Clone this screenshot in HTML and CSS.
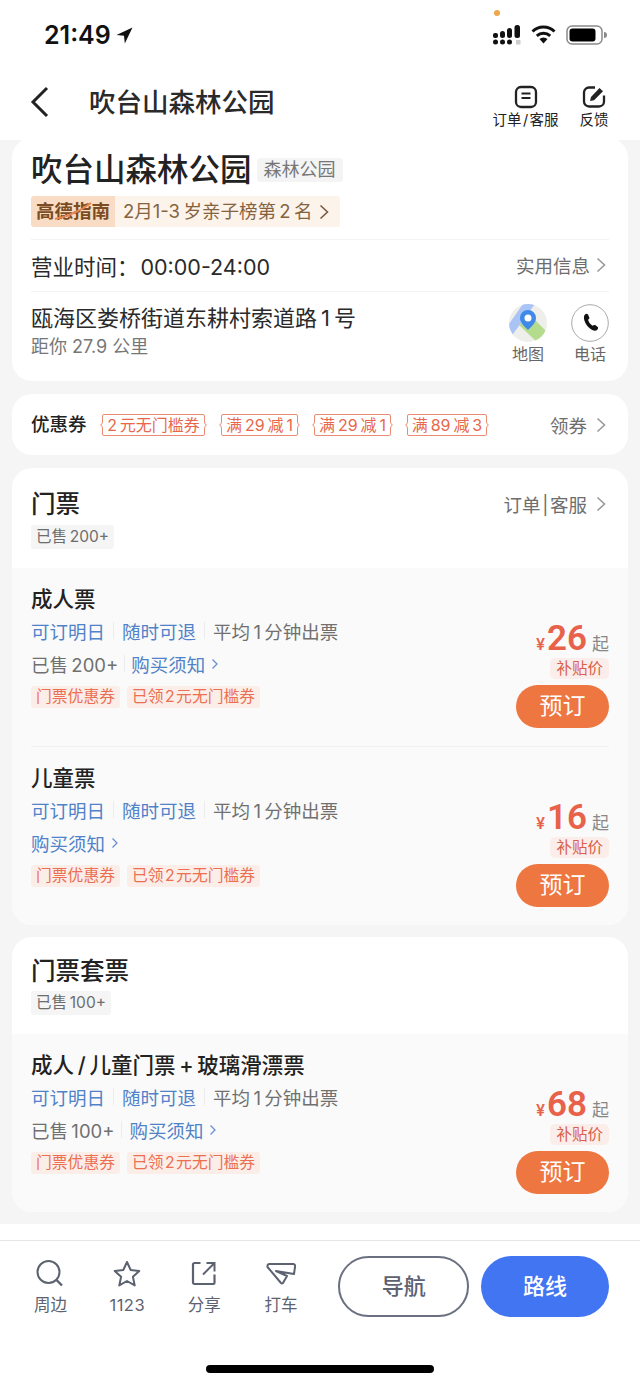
FILE: index.html
```html
<!DOCTYPE html>
<html lang="zh-CN">
<head>
<meta charset="utf-8">
<title>吹台山森林公园</title>
<link rel="stylesheet" href="styles.css">
</head>
<body>
<div class="page">
  <header class="top">
    <div class="status">
      <div class="clock"><span>21:49</span>
        <svg class="loc" width="17" height="17" viewBox="0 0 17 17"><path d="M16.500.5.500 8l7.500.8.800 7.700z" fill="#111"/></svg>
      </div>
      <div class="sys">
        <i class="dot"></i>
        <svg width="28" height="20" viewBox="0 0 28 20"><g fill="#111"><circle cx="2.500" cy="17" r="2.500"/><circle cx="9.500" cy="17" r="2.500"/><circle cx="16.500" cy="17" r="2.500"/><rect x="23" y="15" width="4.500" height="4.500" fill="#ccc"/><rect x="0" y="8" width="5" height="5" rx="2"/><rect x="7" y="6" width="5" height="7" rx="2.500"/><rect x="14" y="3" width="5" height="10" rx="2.500"/><rect x="21.500" y="0" width="5.500" height="13" rx="2.500"/></g></svg>
        <svg class="wifi" width="25" height="19" viewBox="0 0 25 19"><g fill="none" stroke="#111" stroke-width="3"><path d="M1.500 6.500a16 16 0 0 1 22 0"/><path d="M5.800 10.800a10 10 0 0 1 13.400 0"/></g><path d="M8.500 14a6 6 0 0 1 8 0l-4 4.500z" fill="#111"/></svg>
        <svg class="batt" width="41" height="20" viewBox="0 0 41 20"><rect x="1" y="1" width="35" height="18" rx="5" fill="#fff" stroke="#8a8a8a" stroke-width="1.500"/><rect x="3.500" y="3.500" width="26" height="13" rx="3" fill="#000"/><path d="M38 7a3 3 0 0 1 0 6z" fill="#8a8a8a"/></svg>
      </div>
    </div>
    <nav class="nav">
      <svg class="back" width="19" height="32" viewBox="0 0 19 32"><path d="M17 2 3 16l14 14" fill="none" stroke="#222" stroke-width="3"/></svg>
      <h1 class="nav-title">吹台山森林公园</h1>
      <div class="nav-act act-order">
        <svg width="24" height="24" viewBox="0 0 24 24"><rect x="2" y="2" width="20" height="20" rx="5" fill="none" stroke="#222" stroke-width="2.300"/><path d="M7.500 8.500h9M7.500 13h9" stroke="#222" stroke-width="2.200" fill="none"/></svg>
        <span>订单&#8202;/&#8202;客服</span>
      </div>
      <div class="nav-act act-feed">
        <svg width="24" height="24" viewBox="0 0 24 24"><path d="M13 2.500H7a5 5 0 0 0-5 5v9a5 5 0 0 0 5 5h10a5 5 0 0 0 5-5v-6" fill="none" stroke="#222" stroke-width="2.300"/><path d="m8 16 1-4 8.500-9 3.500 3.200-9 9z" fill="#222"/></svg>
        <span>反馈</span>
      </div>
    </nav>
  </header>

  <main class="main">
    <section class="card info">
      <div class="name-row">
        <h2 class="name">吹台山森林公园</h2>
        <span class="kind">森林公园</span>
      </div>
      <div class="guide">
        <span class="guide-logo">高德指南<svg class="swoosh" width="84" height="31" viewBox="0 0 84 31"><path d="M24 23Q44 19 60 7" fill="none" stroke="#ea8450" stroke-width="2"/></svg></span>
        <span class="guide-text">2月1-3&#8201;岁亲子榜第&#8201;2&#8201;名
          <svg class="chev" width="10" height="16" viewBox="0 0 10 16"><path d="m1.500 1.500 7 6.500-7 6.500" fill="none" stroke="#7a5a40" stroke-width="1.600"/></svg>
        </span>
      </div>
      <div class="hours">
        <span class="hours-text">营业时间：&#8202;00:00-24:00</span>
        <span class="more">实用信息
          <svg class="chev" width="10" height="16" viewBox="0 0 10 16"><path d="m1.500 1.500 7 6.500-7 6.500" fill="none" stroke="#999" stroke-width="1.600"/></svg>
        </span>
      </div>
      <div class="addr">
        <div class="addr-text">
          <div class="addr-main">瓯海区娄桥街道东耕村索道路&#8201;1&#8201;号</div>
          <div class="addr-dist">距你 27.9 公里</div>
        </div>
        <div class="round">
          <svg width="38" height="38" viewBox="0 0 38 38"><defs><clipPath id="mapc"><circle cx="19" cy="19" r="19"/></clipPath></defs><g clip-path="url(#mapc)"><rect width="38" height="38" fill="#eeeeea"/><path d="M0 20 14 0h12l-6 8L4 30H0z" fill="#a9c4f5"/><path d="m10 21 12-9 16 16-10 10z" fill="#b4dc8c"/></g><path d="M19 6a8 8 0 0 1 8 8c0 5-5 9-8 12-3-3-8-7-8-12a8 8 0 0 1 8-8z" fill="#3f8ae8"/><circle cx="19" cy="14" r="3.500" fill="#fff"/></svg>
          <span>地图</span>
        </div>
        <div class="round">
          <svg width="38" height="38" viewBox="0 0 38 38"><circle cx="19" cy="19" r="18.300" fill="#fff" stroke="#aaa" stroke-width="1"/><path d="M14 10.500c1-.8 2.500-1 3 0l1.300 3c.3.800-.2 1.600-1.300 2.300.8 2.600 2.300 4.600 4.600 6 1-.8 1.800-1.100 2.600-.7l2.500 1.800c.8.700.4 1.800-.4 2.800-1.200 1.300-3.200 1.300-5 .3-4.500-2.500-7.700-7-8.300-11.500-.2-1.600.1-3 1-4z" fill="#111"/></svg>
          <span>电话</span>
        </div>
      </div>
    </section>

    <section class="card coupons">
      <span class="coupons-label">优惠券</span>
      <div class="coupon-list">
        <span class="coupon c1"><svg width="6" height="22" viewBox="0 0 6 22"><path d="M6 .5H4Q2.500.5 2.500 2v6q0 2-2 3 2 1 2 3v6q0 1.500 1.500 1.500h2" fill="none" stroke="#e98c74"/></svg><b>2&#8201;元无门槛券</b><svg width="6" height="22" viewBox="0 0 6 22"><path d="M0 .5h2Q3.500.5 3.500 2v6q0 2 2 3-2 1-2 3v6q0 1.500-1.500 1.500H0" fill="none" stroke="#e98c74"/></svg></span>
        <span class="coupon c2"><svg width="6" height="22" viewBox="0 0 6 22"><path d="M6 .5H4Q2.500.5 2.500 2v6q0 2-2 3 2 1 2 3v6q0 1.500 1.500 1.500h2" fill="none" stroke="#e98c74"/></svg><b>满&#8201;29&#8201;减&#8201;1</b><svg width="6" height="22" viewBox="0 0 6 22"><path d="M0 .5h2Q3.500.5 3.500 2v6q0 2 2 3-2 1-2 3v6q0 1.500-1.500 1.500H0" fill="none" stroke="#e98c74"/></svg></span>
        <span class="coupon c2"><svg width="6" height="22" viewBox="0 0 6 22"><path d="M6 .5H4Q2.500.5 2.500 2v6q0 2-2 3 2 1 2 3v6q0 1.500 1.500 1.500h2" fill="none" stroke="#e98c74"/></svg><b>满&#8201;29&#8201;减&#8201;1</b><svg width="6" height="22" viewBox="0 0 6 22"><path d="M0 .5h2Q3.500.5 3.500 2v6q0 2 2 3-2 1-2 3v6q0 1.500-1.500 1.500H0" fill="none" stroke="#e98c74"/></svg></span>
        <span class="coupon c3"><svg width="6" height="22" viewBox="0 0 6 22"><path d="M6 .5H4Q2.500.5 2.500 2v6q0 2-2 3 2 1 2 3v6q0 1.500 1.500 1.500h2" fill="none" stroke="#e98c74"/></svg><b>满&#8201;89&#8201;减&#8201;3</b><svg width="6" height="22" viewBox="0 0 6 22"><path d="M0 .5h2Q3.500.5 3.500 2v6q0 2 2 3-2 1-2 3v6q0 1.500-1.500 1.500H0" fill="none" stroke="#e98c74"/></svg></span>
      </div>
      <span class="more">领券
        <svg class="chev" width="10" height="16" viewBox="0 0 10 16"><path d="m1.500 1.500 7 6.500-7 6.500" fill="none" stroke="#999" stroke-width="1.600"/></svg>
      </span>
    </section>

    <section class="card tickets">
      <div class="sec-head">
        <div>
          <h3 class="sec-title">门票</h3>
          <span class="sold-tag">已售&#8201;200+</span>
        </div>
        <span class="more sec-more">订单&#8202;|&#8202;客服
          <svg class="chev" width="10" height="16" viewBox="0 0 10 16"><path d="m1.500 1.500 7 6.500-7 6.500" fill="none" stroke="#999" stroke-width="1.600"/></svg>
        </span>
      </div>
      <div class="list">
        <article class="ticket">
          <div class="t-left">
            <h4 class="t-name">成人票</h4>
            <div class="t-row"><span class="blue">可订明日</span><i class="sep"></i><span class="blue">随时可退</span><i class="sep"></i><span>平均&#8201;1&#8201;分钟出票</span></div>
            <div class="t-row"><span>已售&#8201;200+</span><i class="sep tight"></i><span class="blue">购买须知</span><svg class="mini" width="8" height="12" viewBox="0 0 8 12"><path d="m1.500 1.500 4.500 4.500-4.500 4.500" fill="none" stroke="#6a8fd0" stroke-width="1.300"/></svg></div>
            <div class="t-tags"><span class="o-tag">门票优惠券</span><span class="o-tag">已领&#8202;2&#8202;元无门槛券</span></div>
          </div>
          <div class="t-right">
            <div class="price"><small>¥</small><strong>26</strong><em>起</em></div>
            <span class="subsidy">补贴价</span>
            <span class="book">预订</span>
          </div>
        </article>
        <article class="ticket">
          <div class="t-left">
            <h4 class="t-name">儿童票</h4>
            <div class="t-row"><span class="blue">可订明日</span><i class="sep"></i><span class="blue">随时可退</span><i class="sep"></i><span>平均&#8201;1&#8201;分钟出票</span></div>
            <div class="t-row"><span class="blue">购买须知</span><svg class="mini" width="8" height="12" viewBox="0 0 8 12"><path d="m1.500 1.500 4.500 4.500-4.500 4.500" fill="none" stroke="#6a8fd0" stroke-width="1.300"/></svg></div>
            <div class="t-tags"><span class="o-tag">门票优惠券</span><span class="o-tag">已领&#8202;2&#8202;元无门槛券</span></div>
          </div>
          <div class="t-right">
            <div class="price"><small>¥</small><strong>16</strong><em>起</em></div>
            <span class="subsidy">补贴价</span>
            <span class="book">预订</span>
          </div>
        </article>
      </div>
    </section>

    <section class="card package">
      <div class="sec-head pack-head">
        <div>
          <h3 class="sec-title">门票套票</h3>
          <span class="sold-tag">已售&#8201;100+</span>
        </div>
      </div>
      <div class="list">
        <article class="ticket">
          <div class="t-left">
            <h4 class="t-name">成人&#8201;/&#8201;儿童门票&#8201;+&#8201;玻璃滑漂票</h4>
            <div class="t-row"><span class="blue">可订明日</span><i class="sep"></i><span class="blue">随时可退</span><i class="sep"></i><span>平均&#8201;1&#8201;分钟出票</span></div>
            <div class="t-row"><span>已售&#8201;100+</span><i class="sep mid"></i><span class="blue">购买须知</span><svg class="mini" width="8" height="12" viewBox="0 0 8 12"><path d="m1.500 1.500 4.500 4.500-4.500 4.500" fill="none" stroke="#6a8fd0" stroke-width="1.300"/></svg></div>
            <div class="t-tags"><span class="o-tag">门票优惠券</span><span class="o-tag">已领&#8202;2&#8202;元无门槛券</span></div>
          </div>
          <div class="t-right">
            <div class="price"><small>¥</small><strong>68</strong><em>起</em></div>
            <span class="subsidy">补贴价</span>
            <span class="book">预订</span>
          </div>
        </article>
      </div>
    </section>
  </main>

  <footer class="bottom">
    <div class="bar">
      <div class="tab">
        <svg width="30" height="30" viewBox="0 0 30 30"><circle cx="13.500" cy="13" r="11" fill="none" stroke="#5c6270" stroke-width="2"/><path d="m21.500 21 5.500 5.500" stroke="#5c6270" stroke-width="2.400" fill="none"/></svg>
        <span>周边</span>
      </div>
      <div class="tab">
        <svg width="30" height="30" viewBox="0 0 30 30"><path d="m15 3 3.700 8 8.600 1-6.400 5.800 1.800 8.600L15 22l-7.700 4.400 1.800-8.600L2.700 12l8.600-1z" fill="none" stroke="#5c6270" stroke-width="2" stroke-linejoin="round"/></svg>
        <span class="tab-num">1123</span>
      </div>
      <div class="tab">
        <svg width="30" height="30" viewBox="0 0 30 30"><path d="M11.500 4H5.500A1.500 1.500 0 0 0 4 5.500v18A1.500 1.500 0 0 0 5.500 25h19a1.500 1.500 0 0 0 1-1.500V15.500" fill="none" stroke="#5c6270" stroke-width="2.200"/><path d="M17.500 4h8v8.500M25.500 4 14 15.500" fill="none" stroke="#5c6270" stroke-width="2"/></svg>
        <span>分享</span>
      </div>
      <div class="tab">
        <svg width="30" height="30" viewBox="0 0 30 30"><path d="M3 5h24q2.500 0 2 3l-1 7-18-3 11 5-4 7q-1 1-2 0L1.500 8Q1 5.500 3 5z" fill="none" stroke="#5c6270" stroke-width="2" stroke-linejoin="round"/></svg>
        <span>打车</span>
      </div>
      <button class="btn btn-nav">导航</button>
      <button class="btn btn-route">路线</button>
    </div>
    <div class="home"></div>
  </footer>
</div>
</body>
</html>
```

FILE: styles.css
```css
* { box-sizing: border-box; }
html, body { margin: 0; padding: 0; }
body {
  width: 640px;
  height: 1385px;
  overflow: hidden;
  background: #f5f5f5;
  color: #222;
  font-family: "Inter", "Noto Sans CJK SC", sans-serif;
}
h1, h2, h3, h4 { margin: 0; font-weight: 500; }
em { font-style: normal; }
.page { display: flex; flex-direction: column; height: 1385px; }

/* top */
.top { background: #fff; height: 140px; flex: none; }
.status { height: 70px; display: flex; justify-content: space-between; padding: 0 33px 0 44px; }
.clock { display: flex; align-items: center; gap: 5px; height: 70px; font-size: 25px; font-weight: 600; color: #111; }
.loc { margin-top: 1px; }
.sys { position: relative; display: flex; align-items: center; height: 70px; gap: 10px; }
.sys svg { margin-top: -1px; }
.dot { position: absolute; left: 1px; top: 10px; width: 6px; height: 6px; border-radius: 50%; background: #f0a64c; }
.nav { height: 70px; display: flex; align-items: flex-start; padding-left: 30px; }
.back { margin-top: 16px; flex: none; }
.nav-title { font-size: 26.500px; line-height: 36px; margin: 14px 0 0 40px; color: #2a2a2a; width: 403px; flex: none; }
.nav-act { display: flex; flex-direction: column; align-items: center; font-size: 14.500px; line-height: 20px; color: #222; padding-top: 15px; flex: none; }
.nav-act svg { display: block; margin-bottom: 1px; }
.act-order { width: 67px; }
.act-feed { width: 30px; margin-left: 20px; }
.nav-act span { white-space: nowrap; }

/* main */
.main { flex: 1; padding: 0 12px; display: flex; flex-direction: column; gap: 13px; }
.card { background: #fff; border-radius: 20px; overflow: hidden; flex: none; }
.info { height: 243px; margin-top: -2px; padding: 12px 19px 0; }
.package { margin-top: -1px; }
.name-row { display: flex; align-items: center; gap: 5px; height: 40px; }
.name { font-size: 31.500px; line-height: 40px; color: #222; white-space: nowrap; }
.kind { font-size: 18px; line-height: 24px; padding: 0 7px; background: #f4f4f4; color: #777; border-radius: 3px; margin-top: -1px; }
.guide { display: inline-flex; margin-top: 6px; height: 31px; border-radius: 3px; overflow: hidden; font-size: 18.500px; line-height: 31px; }
.guide-logo { position: relative; width: 84px; text-align: center; background: #f8dcc5; color: #7b4c22; font-weight: 700; }
.swoosh { position: absolute; left: 0; top: 0; }
.guide-text { display: flex; align-items: center; gap: 7px; width: 225px; padding-left: 8px; background: #fcf3ea; color: #86633f; white-space: nowrap; }
.chev { flex: none; }
.hours { display: flex; align-items: center; justify-content: space-between; height: 53px; margin-top: 12px; padding-bottom: 1px; border-top: 1px solid #f3f3f3; border-bottom: 1px solid #f3f3f3; }
.hours-text { font-size: 21.500px; color: #2a2a2a; }
.more { display: inline-flex; align-items: center; gap: 6px; padding-right: 3px; font-size: 18.500px; color: #6d6d6d; white-space: nowrap; }
.addr { display: flex; align-items: flex-start; padding-top: 12px; }
.addr-text { flex: 1; }
.addr-main { font-size: 22px; line-height: 28px; color: #2a2a2a; white-space: nowrap; }
.addr-dist { font-size: 18px; line-height: 26px; margin-top: 2px; color: #777; }
.round { width: 38px; display: flex; flex-direction: column; align-items: center; font-size: 16px; line-height: 22px; color: #666; margin-left: 24px; }
.round svg { display: block; margin-bottom: 1px; }
.round span { white-space: nowrap; }

.coupons { height: 61px; display: flex; align-items: center; padding: 0 19px; }
.coupons-label { font-size: 18.500px; font-weight: 500; width: 69px; flex: none; color: #222; margin-bottom: 3px; }
.coupon-list { display: flex; gap: 12px; margin-top: 1px; }
.coupon { display: inline-flex; height: 22px; align-items: stretch; flex: none; }
.coupon svg { flex: none; display: block; }
.coupon b { font-weight: 400; font-size: 16px; line-height: 20px; height: 22px; color: #e8674c; border-top: 1px solid #e98c74; border-bottom: 1px solid #e98c74; white-space: nowrap; text-align: center; flex: 1; }
.c1 { width: 107px; }
.c2 { width: 81px; }
.c3 { width: 84px; }
.coupons .more { margin-left: auto; gap: 9px; }

.sec-head { display: flex; justify-content: space-between; align-items: flex-start; height: 100px; padding: 18px 19px 0; }
.pack-head { height: 97px; padding-top: 16px; }
.sec-title { font-size: 24.500px; line-height: 36px; color: #222; }
.sold-tag { display: inline-block; margin-top: 3px; font-size: 15.500px; line-height: 24px; padding: 0 5px; background: #f5f5f5; color: #6d6d6d; border-radius: 3px; }
.pack-head .sold-tag { margin-top: 2px; }
.sec-more { margin-top: 5px; gap: 9px; }

.list { background: #fafafa; }
.ticket { display: flex; justify-content: space-between; align-items: flex-start; margin: 0 19px; padding: 18px 0 0; border-bottom: 1px solid #f1f1f1; height: 179px; }
.ticket:last-child { border-bottom: 0; height: 178px; }
.t-name { font-size: 21.500px; line-height: 26px; color: #222; white-space: nowrap; }
.t-row { display: flex; align-items: center; height: 33px; font-size: 18.500px; color: #707070; white-space: nowrap; }
.t-name + .t-row { margin-top: 2px; }
.blue { color: #4f82c8; }
.sep { width: 1px; height: 17px; background: #ececec; margin: 0 8px; }
.sep.tight { margin: 0 6px; }
.sep.mid { margin: 0 7px; }
.mini { margin-left: 6px; }
.t-tags { display: flex; gap: 7px; margin-top: 6px; }
.o-tag { font-size: 15.800px; line-height: 22px; padding: 0 5px; background: #fbeee9; color: #ec6f52; border-radius: 3px; white-space: nowrap; }
.t-right { display: flex; flex-direction: column; align-items: flex-end; margin-top: 34px; }
.price { display: flex; align-items: baseline; height: 38px; line-height: 38px; color: #e8624a; }
.price small { font-size: 16px; font-weight: 600; margin-right: 2px; }
.price strong { font-size: 35px; font-weight: 600; font-family: "Roboto", sans-serif; }
.price em { font-size: 17px; color: #888; margin-left: 5px; }
.subsidy { font-size: 15.500px; line-height: 21px; height: 21px; padding: 0 6px; background: #fbeeea; color: #d9604a; border-radius: 5px; }
.book { margin-top: 6px; width: 93px; height: 43px; line-height: 42px; text-align: center; border-radius: 22px; background: #ee7640; color: #fff; font-size: 23px; }

/* bottom */
.bottom { flex: none; height: 161px; background: #fff; display: flex; flex-direction: column; padding-top: 16px; }
.bar { border-top: 1px solid #e6e6e6; display: flex; align-items: flex-start; height: 125px; padding: 15px 31px 0 12px; }
.tab { width: 77px; display: flex; flex-direction: column; align-items: center; font-size: 16.500px; line-height: 22px; color: #5c6270; }
.tab-num { letter-spacing: .5px; }
.tab svg { display: block; margin-top: 3px; margin-bottom: 5px; }
.btn { height: 61px; border-radius: 31px; font: 500 22px "Inter", "Noto Sans CJK SC", sans-serif; padding: 0 0 6px; }
.btn-nav { width: 131px; margin-left: 19px; background: #fff; border: 2px solid #6a7080; color: #5c6270; }
.btn-route { width: 128px; margin-left: 12px; background: #4275f1; border: 0; color: #fff; }
.home { width: 228px; height: 8px; border-radius: 4px; background: #000; margin: 0 auto; }
```
